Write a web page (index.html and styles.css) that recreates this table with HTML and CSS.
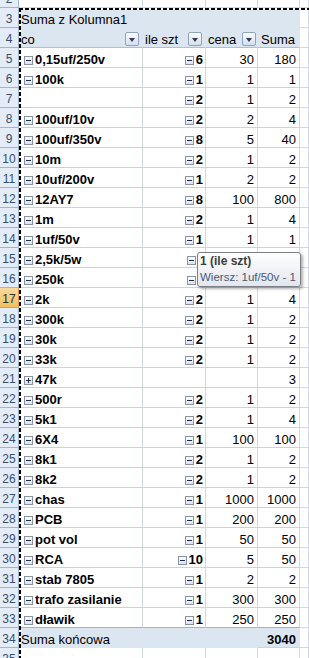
FILE: index.html
```html
<!DOCTYPE html>
<html>
<head>
<meta charset="utf-8">
<link rel="stylesheet" href="styles.css">
</head>
<body>
<div class="sheet">
  <div class="row"><div class="rh">2</div><div class="c"></div><div class="c"></div><div class="c"></div><div class="c"></div><div class="c"></div></div>
  <div class="row hdr3"><div class="rh">3</div><div class="c h">Suma z Kolumna1</div><div class="c h"></div><div class="c h"></div><div class="c h"></div><div class="c"></div></div>
  <div class="row hdr4"><div class="rh">4</div><div class="c h hb">co<span class="dd"></span></div><div class="c h hb hbB">ile szt<span class="dd"></span></div><div class="c h hb hbC">cena<span class="dd"></span></div><div class="c h hb hbD">Suma</div><div class="c"></div></div>

  <div class="row"><div class="rh">5</div><div class="c a"><span class="mi"></span>0,15uf/250v</div><div class="c b"><span class="mi"></span>6</div><div class="c n">30</div><div class="c n">180</div><div class="c"></div></div>
  <div class="row"><div class="rh">6</div><div class="c a"><span class="mi"></span>100k</div><div class="c b"><span class="mi"></span>1</div><div class="c n">1</div><div class="c n">1</div><div class="c"></div></div>
  <div class="row"><div class="rh">7</div><div class="c a"></div><div class="c b"><span class="mi"></span>2</div><div class="c n">1</div><div class="c n">2</div><div class="c"></div></div>
  <div class="row"><div class="rh">8</div><div class="c a"><span class="mi"></span>100uf/10v</div><div class="c b"><span class="mi"></span>2</div><div class="c n">2</div><div class="c n">4</div><div class="c"></div></div>
  <div class="row"><div class="rh">9</div><div class="c a"><span class="mi"></span>100uf/350v</div><div class="c b"><span class="mi"></span>8</div><div class="c n">5</div><div class="c n">40</div><div class="c"></div></div>
  <div class="row"><div class="rh">10</div><div class="c a"><span class="mi"></span>10m</div><div class="c b"><span class="mi"></span>2</div><div class="c n">1</div><div class="c n">2</div><div class="c"></div></div>
  <div class="row"><div class="rh">11</div><div class="c a"><span class="mi"></span>10uf/200v</div><div class="c b"><span class="mi"></span>1</div><div class="c n">2</div><div class="c n">2</div><div class="c"></div></div>
  <div class="row"><div class="rh">12</div><div class="c a"><span class="mi"></span>12AY7</div><div class="c b"><span class="mi"></span>8</div><div class="c n">100</div><div class="c n">800</div><div class="c"></div></div>
  <div class="row"><div class="rh">13</div><div class="c a"><span class="mi"></span>1m</div><div class="c b"><span class="mi"></span>2</div><div class="c n">1</div><div class="c n">4</div><div class="c"></div></div>
  <div class="row"><div class="rh">14</div><div class="c a"><span class="mi"></span>1uf/50v</div><div class="c b"><span class="mi"></span>1</div><div class="c n">1</div><div class="c n">1</div><div class="c"></div></div>
  <div class="row"><div class="rh">15</div><div class="c a"><span class="mi"></span>2,5k/5w</div><div class="c b hid"><span class="mi"></span></div><div class="c n"></div><div class="c n"></div><div class="c"></div></div>
  <div class="row"><div class="rh">16</div><div class="c a"><span class="mi"></span>250k</div><div class="c b hid"><span class="mi"></span></div><div class="c n"></div><div class="c n"></div><div class="c"></div></div>
  <div class="row"><div class="rh sel">17</div><div class="c a"><span class="mi"></span>2k</div><div class="c b"><span class="mi"></span>2</div><div class="c n">1</div><div class="c n">4</div><div class="c"></div></div>
  <div class="row"><div class="rh">18</div><div class="c a"><span class="mi"></span>300k</div><div class="c b"><span class="mi"></span>2</div><div class="c n">1</div><div class="c n">2</div><div class="c"></div></div>
  <div class="row"><div class="rh">19</div><div class="c a"><span class="mi"></span>30k</div><div class="c b"><span class="mi"></span>2</div><div class="c n">1</div><div class="c n">2</div><div class="c"></div></div>
  <div class="row"><div class="rh">20</div><div class="c a"><span class="mi"></span>33k</div><div class="c b"><span class="mi"></span>2</div><div class="c n">1</div><div class="c n">2</div><div class="c"></div></div>
  <div class="row"><div class="rh">21</div><div class="c a"><span class="mi pl"></span>47k</div><div class="c b"></div><div class="c n"></div><div class="c n">3</div><div class="c"></div></div>
  <div class="row"><div class="rh">22</div><div class="c a"><span class="mi"></span>500r</div><div class="c b"><span class="mi"></span>2</div><div class="c n">1</div><div class="c n">2</div><div class="c"></div></div>
  <div class="row"><div class="rh">23</div><div class="c a"><span class="mi"></span>5k1</div><div class="c b"><span class="mi"></span>2</div><div class="c n">1</div><div class="c n">4</div><div class="c"></div></div>
  <div class="row"><div class="rh">24</div><div class="c a"><span class="mi"></span>6X4</div><div class="c b"><span class="mi"></span>1</div><div class="c n">100</div><div class="c n">100</div><div class="c"></div></div>
  <div class="row"><div class="rh">25</div><div class="c a"><span class="mi"></span>8k1</div><div class="c b"><span class="mi"></span>2</div><div class="c n">1</div><div class="c n">2</div><div class="c"></div></div>
  <div class="row"><div class="rh">26</div><div class="c a"><span class="mi"></span>8k2</div><div class="c b"><span class="mi"></span>2</div><div class="c n">1</div><div class="c n">2</div><div class="c"></div></div>
  <div class="row"><div class="rh">27</div><div class="c a"><span class="mi"></span>chas</div><div class="c b"><span class="mi"></span>1</div><div class="c n">1000</div><div class="c n">1000</div><div class="c"></div></div>
  <div class="row"><div class="rh">28</div><div class="c a"><span class="mi"></span>PCB</div><div class="c b"><span class="mi"></span>1</div><div class="c n">200</div><div class="c n">200</div><div class="c"></div></div>
  <div class="row"><div class="rh">29</div><div class="c a"><span class="mi"></span>pot vol</div><div class="c b"><span class="mi"></span>1</div><div class="c n">50</div><div class="c n">50</div><div class="c"></div></div>
  <div class="row"><div class="rh">30</div><div class="c a"><span class="mi"></span>RCA</div><div class="c b"><span class="mi"></span>10</div><div class="c n">5</div><div class="c n">50</div><div class="c"></div></div>
  <div class="row"><div class="rh">31</div><div class="c a"><span class="mi"></span>stab 7805</div><div class="c b"><span class="mi"></span>1</div><div class="c n">2</div><div class="c n">2</div><div class="c"></div></div>
  <div class="row"><div class="rh">32</div><div class="c a"><span class="mi"></span>trafo zasilanie</div><div class="c b"><span class="mi"></span>1</div><div class="c n">300</div><div class="c n">300</div><div class="c"></div></div>
  <div class="row lastdata"><div class="rh">33</div><div class="c a"><span class="mi"></span>dławik</div><div class="c b"><span class="mi"></span>1</div><div class="c n">250</div><div class="c n">250</div><div class="c"></div></div>
  <div class="row total"><div class="rh">34</div><div class="c h tl">Suma końcowa</div><div class="c h"></div><div class="c h"></div><div class="c h n tb">3040</div><div class="c"></div></div>
  <div class="row"><div class="rh">35</div><div class="c"></div><div class="c"></div><div class="c"></div><div class="c"></div><div class="c"></div></div>

  <div class="ants-top"></div>
  <div class="ants-left"></div>

  <div class="tip">
    <div class="tip-t">1 (ile szt)</div>
    <div class="tip-s">Wiersz: 1uf/50v - 1</div>
  </div>
</div>
</body>
</html>
```
FILE: styles.css
```css
html, body {
  margin: 0;
  padding: 0;
  background: #fff;
  overflow: hidden;
}
body {
  width: 309px;
  height: 658px;
  font-family: "Liberation Sans", Arial, sans-serif;
  font-size: 13px;
  color: #000;
}
.sheet {
  position: relative;
  margin-top: -12px;
}
.row {
  display: grid;
  grid-template-columns: 19px 124px 63px 52px 42px 1fr;
  height: 20px;
}
.c, .rh {
  box-sizing: border-box;
  height: 20px;
  border-right: 1px solid #d0d7e5;
  border-bottom: 1px solid #d0d7e5;
  padding: 4px 2px 0 2px;
  line-height: 15px;
  white-space: nowrap;
}
.rh {
  background: #e4ecf7;
  border-right-color: #9eb6ce;
  border-bottom-color: #9eb6ce;
  color: #3a4d6b;
  font-size: 12px;
  text-align: center;
  padding: 4px 0 0 0;
}
.rh.sel {
  background: linear-gradient(#f9d99f, #f1c15f);
  border-bottom-color: #f29536;
  border-right-color: #f29536;
  color: #2b2b2b;
}
.h {
  background: #dce6f1;
  border-right-color: #dce6f1;
  border-bottom-color: #dce6f1;
}
.hb {
  display: flex;
  align-items: flex-start;
  justify-content: space-between;
  border-bottom-color: #a9c0de;
  padding-right: 3px;
}
.hbB { padding-left: 2px; }
.hbC { padding-left: 2px; padding-right: 1px; }
.hbD { padding-left: 3px; }
.dd {
  box-sizing: border-box;
  width: 14px;
  height: 14px;
  border: 1px solid #8ea3bf;
  border-radius: 2px;
  background: linear-gradient(#fbfcfe, #d5dfec);
  display: flex;
  align-items: center;
  justify-content: center;
}
.dd::after {
  content: "";
  width: 0;
  height: 0;
  border-left: 3.5px solid transparent;
  border-right: 3.5px solid transparent;
  border-top: 4px solid #2e3d55;
  margin-top: 1px;
}
.a {
  padding-left: 5px;
  font-weight: bold;
  border-bottom-color: #c3d3e8;
}
.b {
  text-align: right;
  font-weight: bold;
  border-bottom-color: #c3d3e8;
}
.b.hid {
  text-align: left;
  padding-left: 44px;
}
.n {
  text-align: right;
  padding-right: 3px;
  border-bottom-color: #c3d3e8;
}
.mi {
  display: inline-block;
  box-sizing: border-box;
  width: 9px;
  height: 9px;
  border: 1px solid #8592a8;
  background: linear-gradient(#ffffff, #dbe2ec);
  vertical-align: -1px;
  margin-right: 2px;
  position: relative;
}
.mi::before {
  content: "";
  position: absolute;
  left: 1px;
  top: 3px;
  width: 5px;
  height: 1px;
  background: #1f2a3a;
}
.mi.pl::after {
  content: "";
  position: absolute;
  left: 3px;
  top: 1px;
  width: 1px;
  height: 5px;
  background: #1f2a3a;
}
.lastdata .a, .lastdata .b, .lastdata .n {
  border-bottom-color: #95b3d7;
}
.tl { padding-left: 2px; }
.tb { font-weight: bold; border-right-color: #dce6f1; }
.ants-top {
  position: absolute;
  left: 19px;
  right: 0;
  top: 20px;
  height: 2px;
  background: repeating-linear-gradient(90deg, #000 0 4px, #fff 4px 6px);
}
.ants-left {
  position: absolute;
  left: 19px;
  top: 20px;
  bottom: 0;
  width: 2px;
  background: repeating-linear-gradient(180deg, #000 0 4px, #fff 4px 6px);
}
.tip {
  position: absolute;
  left: 197px;
  top: 264px;
  width: 104px;
  height: 35px;
  box-sizing: border-box;
  border: 1px solid #7b7f86;
  border-radius: 3px;
  background: linear-gradient(#ffffff, #e3e6ef);
  box-shadow: 2px 2px 3px rgba(0, 0, 0, 0.3);
  padding: 0 0 0 2px;
  line-height: 16px;
  white-space: nowrap;
}
.tip-t {
  font-size: 12px;
  font-weight: bold;
  color: #3c3c3c;
}
.tip-s {
  font-size: 11.5px;
  color: #4a5870;
}
```
